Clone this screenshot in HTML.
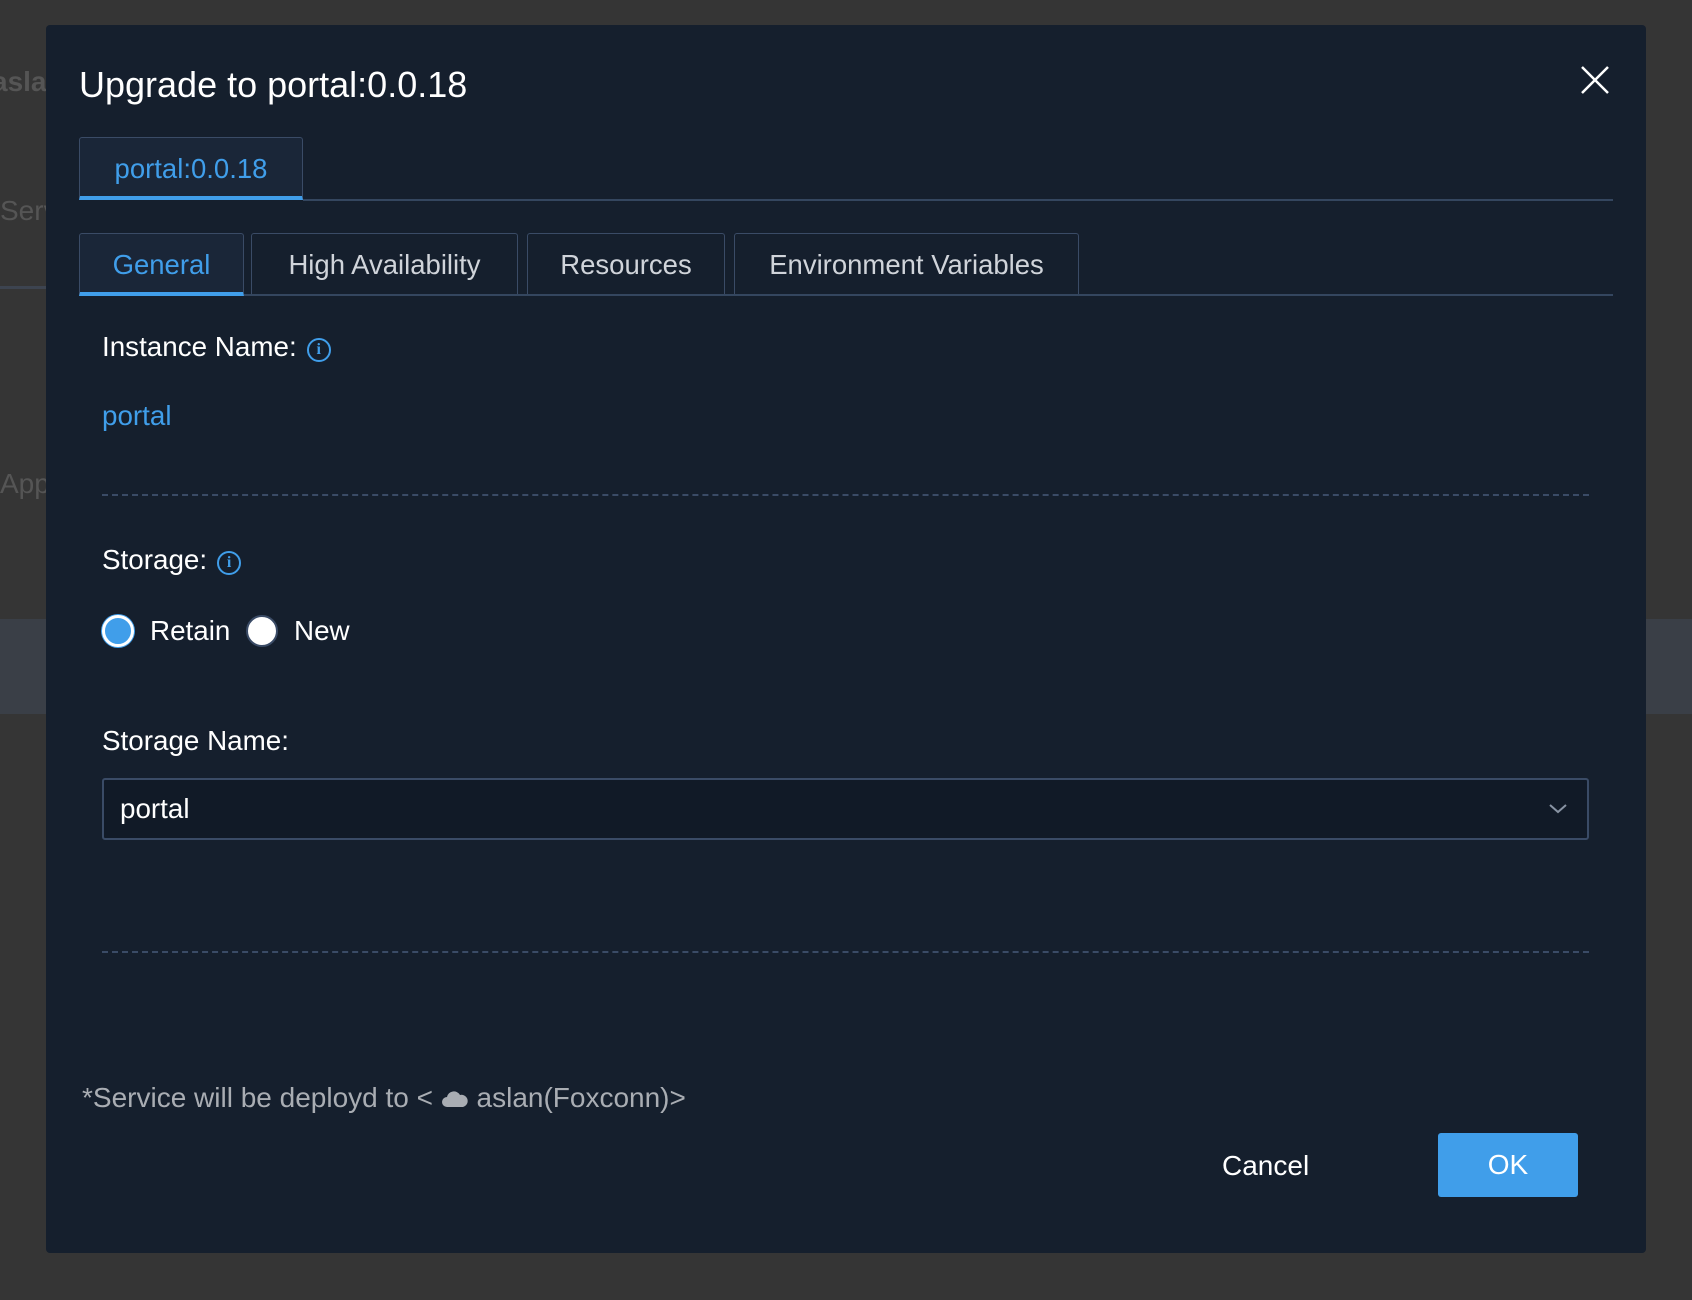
<!DOCTYPE html>
<html><head><meta charset="utf-8"><style>
*{box-sizing:border-box;margin:0;padding:0}
body{width:1692px;height:1300px;background:#353535;font-family:"Liberation Sans",Helvetica,Arial,sans-serif;position:relative;overflow:hidden}
.abs{position:absolute}
.bgt{color:#555;font-size:28px}
.modal{position:absolute;left:46px;top:25px;width:1600px;height:1228px;background:#151f2d;border-radius:4px}
.tab{position:absolute;border:1px solid #3a4b66;border-bottom:none;border-radius:3px 3px 0 0;color:#d0d4da;font-size:27.5px;text-align:center;line-height:62px;height:63px}
.tab.act{background:#1a2638;color:#409eea;border-bottom:4px solid #409eea}
.line{position:absolute;height:2px;background:#34465f}
.dash{position:absolute;left:56px;width:1487px;border-top:2px dashed #3a4b66}
.lbl{position:absolute;color:#fff;font-size:27.8px}
.info{display:inline-block;width:24px;height:24px;border:2px solid #409eea;border-radius:50%;color:#409eea;font-size:16px;font-weight:bold;text-align:center;line-height:20px;font-family:"Liberation Serif",serif;vertical-align:2px;margin-left:10px}
</style></head><body>
<div class="abs bgt" style="left:-8px;top:66px;font-weight:bold">aslan</div>
<div class="abs bgt" style="left:0;top:195px">Serv</div>
<div class="abs" style="left:0;top:286px;width:46px;height:3px;background:#3d4450"></div>
<div class="abs bgt" style="left:0;top:468px">App</div>
<div class="abs" style="left:0;top:619px;width:1692px;height:95px;background:#3a3f47"></div>
<div class="modal">
  <div class="abs" style="left:33px;top:39px;color:#fff;font-size:36px">Upgrade to portal:0.0.18</div>
  <svg class="abs" style="left:1534px;top:40px" width="30" height="30" viewBox="0 0 30 30"><path d="M2 2L28 28M28 2L2 28" stroke="#fff" stroke-width="2.5"/></svg>
  <div class="tab act" style="left:33px;top:112px;width:224px">portal:0.0.18</div>
  <div class="line" style="left:257px;top:174px;width:1310px"></div>
  <div class="tab act" style="left:33px;top:208px;width:165px">General</div>
  <div class="tab" style="left:205px;top:208px;width:267px">High Availability</div>
  <div class="tab" style="left:481px;top:208px;width:198px">Resources</div>
  <div class="tab" style="left:688px;top:208px;width:345px">Environment Variables</div>
  <div class="line" style="left:198px;top:269px;width:1369px"></div>
  <div class="lbl" style="left:56px;top:306px">Instance Name:<span class="info">i</span></div>
  <div class="lbl" style="left:56px;top:375px;color:#409eea">portal</div>
  <div class="dash" style="top:469px"></div>
  <div class="lbl" style="left:56px;top:519px">Storage:<span class="info">i</span></div>
  <div class="abs" style="left:56px;top:590px;width:32px;height:32px;border-radius:50%;border:3px solid #fff;background:#409eea;box-shadow:0 0 0 1px #409eea"></div>
  <div class="lbl" style="left:104px;top:590px">Retain</div>
  <div class="abs" style="left:200px;top:590px;width:32px;height:32px;border-radius:50%;background:#fff;border:2px solid #3a4b66"></div>
  <div class="lbl" style="left:248px;top:590px">New</div>
  <div class="lbl" style="left:56px;top:700px">Storage Name:</div>
  <div class="abs" style="left:56px;top:753px;width:1487px;height:62px;border:2px solid #3a4b66;border-radius:3px;background:#111a27"></div>
  <div class="lbl" style="left:74px;top:768px">portal</div>
  <svg class="abs" style="left:1502px;top:776px" width="20" height="14" viewBox="0 0 20 14"><path d="M2 4L10 11L18 4" stroke="#8893a3" stroke-width="2" fill="none"/></svg>
  <div class="dash" style="top:926px"></div>
  <div class="abs" style="left:36px;top:1057px;color:#a9adb3;font-size:28px">*Service will be deployd to &lt; <svg width="28" height="18" viewBox="0 0 28 18" style="vertical-align:-1px"><path d="M6 17a5 5 0 0 1 0-10a7 7 0 0 1 13-2a6 6 0 0 1 3 12z" fill="#a9adb3"/></svg> aslan(Foxconn)&gt;</div>
  <div class="abs" style="left:1176px;top:1125px;color:#fff;font-size:28px">Cancel</div>
  <div class="abs" style="left:1392px;top:1108px;width:140px;height:64px;background:#409eea;border-radius:3px;color:#fff;font-size:28px;text-align:center;line-height:64px">OK</div>
</div>
</body></html>
